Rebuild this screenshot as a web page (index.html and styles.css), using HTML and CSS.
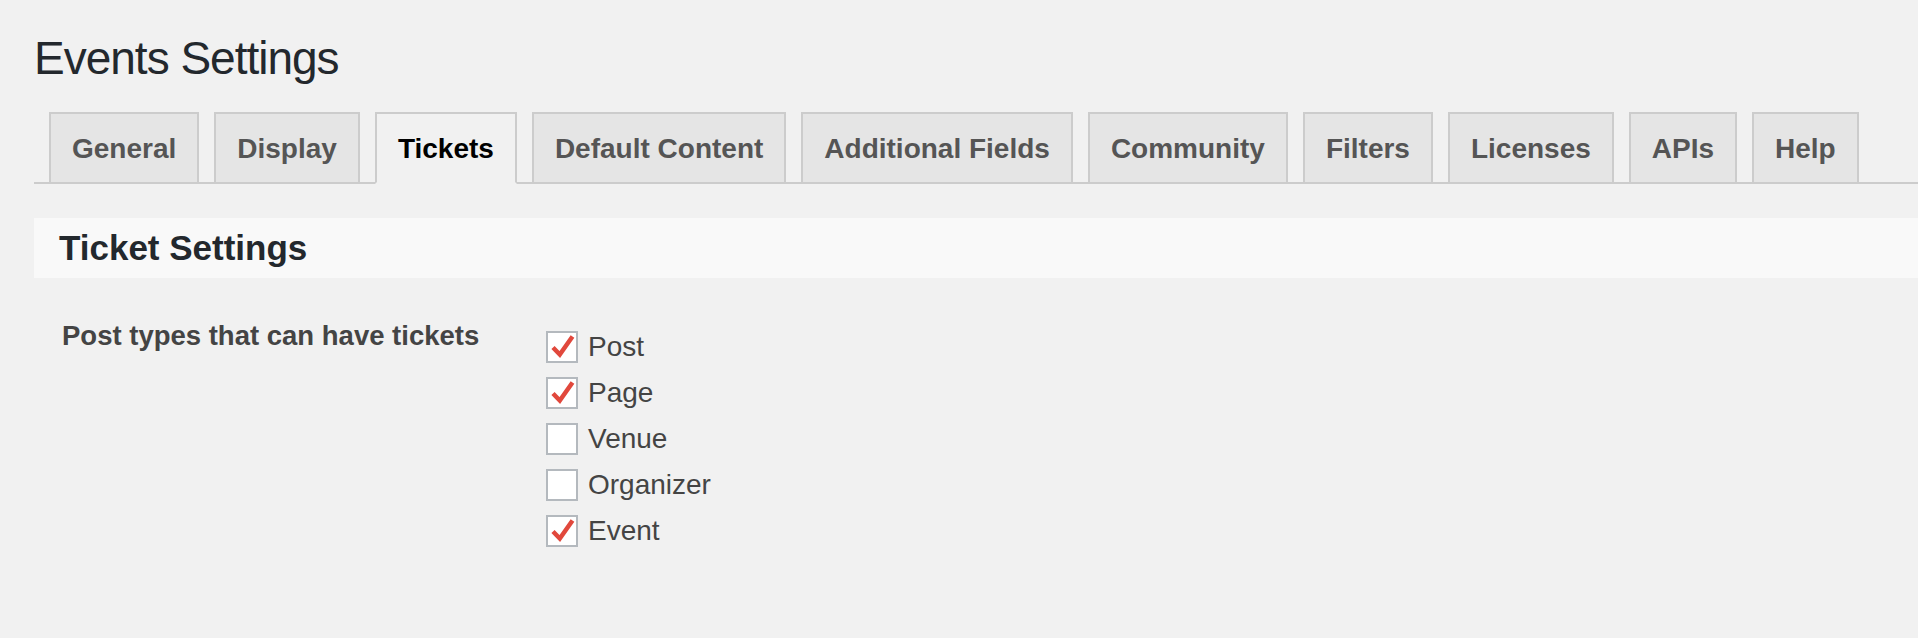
FILE: index.html
```html
<!DOCTYPE html>
<html lang="en">
<head>
<meta charset="utf-8">
<title>Events Settings</title>
<link rel="stylesheet" href="styles.css">
</head>
<body>
<div class="wrap">
  <h1 class="page-title">Events Settings</h1>
  <nav class="tabs">
    <a class="tab">General</a>
    <a class="tab">Display</a>
    <a class="tab tab-active">Tickets</a>
    <a class="tab">Default Content</a>
    <a class="tab">Additional Fields</a>
    <a class="tab">Community</a>
    <a class="tab">Filters</a>
    <a class="tab">Licenses</a>
    <a class="tab">APIs</a>
    <a class="tab">Help</a>
  </nav>
  <h3 class="section-title">Ticket Settings</h3>
  <div class="form-row">
    <div class="form-label">Post types that can have tickets</div>
    <div class="options">
      <label class="option"><span class="box checked"><svg viewBox="0 0 32 32" class="tick"><path d="M7 16.5 L13.8 23.5 L26.5 5.5"/></svg></span>Post</label>
      <label class="option"><span class="box checked"><svg viewBox="0 0 32 32" class="tick"><path d="M7 16.5 L13.8 23.5 L26.5 5.5"/></svg></span>Page</label>
      <label class="option"><span class="box"></span>Venue</label>
      <label class="option"><span class="box"></span>Organizer</label>
      <label class="option"><span class="box checked"><svg viewBox="0 0 32 32" class="tick"><path d="M7 16.5 L13.8 23.5 L26.5 5.5"/></svg></span>Event</label>
    </div>
  </div>
</div>
</body>
</html>
```

FILE: styles.css
```css
html, body {
  margin: 0;
  padding: 0;
  background: #f1f1f1;
  font-family: "Liberation Sans", Arial, sans-serif;
}

.wrap {
  padding: 9px 0 0 34px;
}

.page-title {
  margin: 0;
  padding: 19px 0 0 0;
  font-size: 46px;
  font-weight: 400;
  line-height: 60px;
  letter-spacing: -1px;
  color: #23282d;
}

.tabs {
  display: flex;
  margin-top: 24px;
  border-bottom: 2px solid #ccc;
}

.tab {
  display: block;
  margin-left: 15px;
  margin-bottom: -2px;
  padding: 11px 21px 9px;
  border: 2px solid #ccc;
  background: #e5e5e5;
  color: #555;
  font-size: 28px;
  font-weight: 700;
  line-height: 48px;
  white-space: nowrap;
}

.tab-active {
  background: #f1f1f1;
  color: #000;
  border-bottom-color: #f1f1f1;
}

.section-title {
  margin: 34px 0 0 0;
  padding: 10px 25px;
  background: #f9f9f9;
  color: #23282d;
  font-size: 35px;
  font-weight: 700;
  line-height: 40px;
}

.form-row {
  display: grid;
  grid-template-columns: 484px 1fr;
  margin-top: 38px;
  padding-left: 28px;
}

.form-label {
  font-size: 27.5px;
  font-weight: 700;
  line-height: 40px;
  color: #444;
}

.options {
  display: flex;
  flex-direction: column;
  padding-top: 8px;
}

.option {
  display: flex;
  align-items: center;
  height: 46px;
  font-size: 28px;
  line-height: 46px;
  color: #444;
}

.box {
  box-sizing: border-box;
  width: 32px;
  height: 32px;
  margin-right: 10px;
  border: 2px solid #b4b9be;
  background: #fff;
  position: relative;
  flex: none;
}

.tick {
  position: absolute;
  left: -2px;
  top: -2px;
  width: 32px;
  height: 32px;
}

.tick path {
  fill: none;
  stroke: #e1483c;
  stroke-width: 4.5;
  stroke-linejoin: miter;
}
```
